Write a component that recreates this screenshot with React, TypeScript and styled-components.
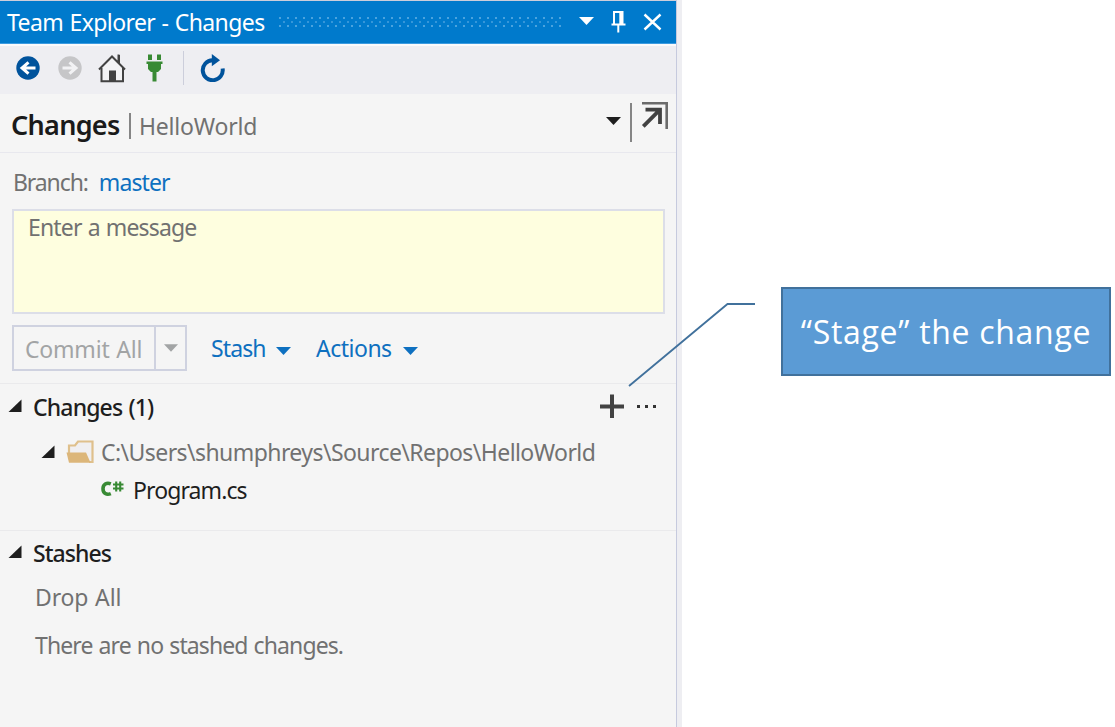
import React from "react";
import styled, { createGlobalStyle } from "styled-components";

const GlobalStyle = createGlobalStyle`
  * { box-sizing: border-box; }
  body {
    margin: 0;
    background: #ffffff;
    font-family: "Noto Sans", "Open Sans", sans-serif;
  }
  svg { display: block; flex: none; }
`;

const Page = styled.div`
  position: relative;
  display: flex;
  align-items: flex-start;
  width: 1115px;
  height: 727px;
  overflow: hidden;
`;

const Dock = styled.div`
  display: flex;
  width: 682px;
  height: 727px;
  background: #eeeef2;
`;

const Panel = styled.section`
  display: flex;
  flex-direction: column;
  width: 677px;
  height: 727px;
  border-top: 1px solid #cccedb;
  border-right: 1px solid #c6cade;
  background: #f5f5f5;
`;

const Label = styled.span<{ $size?: number; $track?: number; $weight?: number; $color?: string }>`
  flex: none;
  font-size: ${(p) => p.$size ?? 23}px;
  font-weight: ${(p) => p.$weight ?? 400};
  line-height: 30px;
  letter-spacing: ${(p) => p.$track ?? -0.6}px;
  word-spacing: 1px;
  color: ${(p) => p.$color ?? "#717171"};
  white-space: pre;
`;

const TitleBar = styled.header`
  display: flex;
  align-items: flex-start;
  height: 43px;
  padding: 6px 0 0 7px;
  background: #007acc;
  border-bottom: 1px solid #3c9be0;
`;

const TitleText = styled.div`
  width: 271px;
`;

const Grip = styled.div`
  padding-top: 9px;
  width: 301px;
`;

const TitleButtons = styled.div`
  display: flex;
  gap: 17px;
  padding-top: 3px;
`;

const Toolbar = styled.nav`
  display: flex;
  align-items: center;
  height: 50px;
  padding: 0 0 4px 15px;
  border-top: 2px solid #fafafb;
  background: #eeeef2;
`;

const ToolIcon = styled.span<{ $w: number; $gap: number }>`
  display: flex;
  width: ${(p) => p.$w}px;
  margin-right: ${(p) => p.$gap}px;
`;

const ToolDivider = styled.span`
  width: 1px;
  height: 34px;
  margin-right: 16px;
  background: #cccedb;
`;

const PageHeader = styled.div`
  display: flex;
  height: 59px;
  padding: 7px 8px 0 11px;
  border-bottom: 1px solid #e8e8ee;
`;

const HeaderTitle = styled.div`
  display: flex;
  flex: 1;
  padding-top: 9px;
`;

const TitleSlot = styled.div<{ $w: number }>`
  width: ${(p) => p.$w}px;
  flex: none;
`;

const RepoName = styled.div`
  padding-top: 1px;
`;

const Bar = styled.span<{ $h: number; $top: number }>`
  width: 2px;
  height: ${(p) => p.$h}px;
  margin-top: ${(p) => p.$top}px;
  background: #858585;
`;

const HeaderActions = styled.div`
  display: flex;
`;

const BranchRow = styled.div`
  display: flex;
  gap: 11px;
  height: 56px;
  padding: 14px 0 0 13px;
`;

const MessageBox = styled.div`
  width: 653px;
  height: 105px;
  margin-left: 12px;
  padding: 1px 0 0 14px;
  border: 2px solid #dcdee8;
  background: #fefedf;
`;

const ActionRow = styled.div`
  display: flex;
  height: 70px;
  padding: 11px 0 0 12px;
  border-bottom: 1px solid #eaeaec;
`;

const CommitButton = styled.div`
  display: flex;
  width: 175px;
  height: 46px;
  margin-right: 24px;
  border: 2px solid #cfd2e0;
`;

const CommitText = styled.div`
  width: 142px;
  padding: 7px 0 0 11px;
  border-right: 2px solid #cfd2e0;
`;

const CommitArrow = styled.div`
  padding: 17px 0 0 8px;
`;

const MenuLink = styled.div<{ $w: number }>`
  display: flex;
  justify-content: space-between;
  width: ${(p) => p.$w}px;
  margin-right: 25px;
  padding-top: 8px;
`;

const ArrowSlot = styled.span<{ $top: number }>`
  padding-top: ${(p) => p.$top}px;
`;

const Section = styled.section<{ $h: number; $line?: boolean }>`
  height: ${(p) => p.$h}px;
  padding-top: ${(p) => (p.$line ? 8 : 7)}px;
  border-bottom: ${(p) => (p.$line ? "1px solid #eaeaec" : "0")};
`;

const Row = styled.div<{ $indent: number; $h: number }>`
  display: flex;
  height: ${(p) => p.$h}px;
  padding-left: ${(p) => p.$indent}px;
`;

const Glyph = styled.span<{ $w: number; $top: number }>`
  flex: none;
  width: ${(p) => p.$w}px;
  padding-top: ${(p) => p.$top}px;
`;

const Spacer = styled.span`
  flex: 1;
`;

const SectionTools = styled.div`
  display: flex;
  gap: 12px;
  padding: 1px 19px 0 0;
`;

const Callout = styled.aside`
  display: flex;
  justify-content: center;
  width: 330px;
  height: 89px;
  margin: 287px 0 0 99px;
  padding-top: 21px;
  border: 2px solid #41719c;
  background: #5b9bd5;
`;

const CalloutText = styled.span`
  font-family: "Open Sans", sans-serif;
  font-size: 32px;
  line-height: 44px;
  letter-spacing: 0.7px;
  color: #ffffff;
  white-space: nowrap;
`;

const Leader = styled.svg`
  position: absolute;
  left: 620px;
  top: 295px;
`;

const Caret = ({ color, w = 15, h = 8 }: { color: string; w?: number; h?: number }) => (
  <svg width={w} height={h} viewBox="0 0 15 8">
    <path d="M0 0H15L7.5 8Z" fill={color} />
  </svg>
);

const Expander = () => (
  <svg width="14" height="14" viewBox="0 0 14 14">
    <path d="M13.5 0.5V13H0.5Z" fill="#1e1e1e" />
  </svg>
);

const dots = Array.from({ length: 36 }, (_, i) => i);

export default function App() {
  return (
    <Page>
      <GlobalStyle />
      <Dock>
        <Panel>
          <TitleBar>
            <TitleText>
              <Label $color="#ffffff" $track={-0.6}>Team Explorer - Changes</Label>
            </TitleText>
            <Grip>
              <svg width="286" height="12" viewBox="0 0 286 12">
                {dots.map((i) => (
                  <g key={i} fill="#4ba3de">
                    <rect x={1 + i * 8} y="1" width="2" height="2" />
                    <rect x={1 + i * 8} y="9" width="2" height="2" />
                    {i < 35 && <rect x={5 + i * 8} y="5" width="2" height="2" opacity="0.7" />}
                  </g>
                ))}
              </svg>
            </Grip>
            <TitleButtons>
              <Glyph $w={15} $top={7}>
                <Caret color="#ffffff" />
              </Glyph>
              <svg width="15" height="24" viewBox="0 0 15 24">
                <path d="M3 14V2H11.5V14M0.5 14.5H14.5M7.3 15V22.5" fill="none" stroke="#fff" strokeWidth="2" />
                <path d="M9.8 2V14" stroke="#fff" strokeWidth="3" />
              </svg>
              <svg width="19" height="24" viewBox="0 0 19 24">
                <path d="M1.5 4.5L17.5 19.5M17.5 4.5L1.5 19.5" stroke="#fff" strokeWidth="2.4" />
              </svg>
            </TitleButtons>
          </TitleBar>

          <Toolbar>
            <ToolIcon $w={26} $gap={16}>
              <svg width="26" height="26" viewBox="0 0 26 26">
                <circle cx="13" cy="13" r="11.7" fill="#00539c" />
                <path d="M20.5 13H8M13.5 7.3L7 13L13.5 18.7" fill="none" stroke="#fff" strokeWidth="3" />
              </svg>
            </ToolIcon>
            <ToolIcon $w={26} $gap={15}>
              <svg width="26" height="26" viewBox="0 0 26 26">
                <circle cx="13" cy="13" r="11.7" fill="#c6c6c8" />
                <path d="M5.5 13H18M12.5 7.3L19 13L12.5 18.7" fill="none" stroke="#f2f2f4" strokeWidth="3" />
              </svg>
            </ToolIcon>
            <ToolIcon $w={28} $gap={20}>
              <svg width="28" height="29" viewBox="0 0 28 29">
                <path d="M4 13V27H25V13L14 3Z" fill="#f3f3f5" />
                <path d="M1 15.5L14 2.5L27 15.5M20.5 8.5V0.5M20.5 8.5V1M21 9.5V1" fill="none" stroke="#424242" strokeWidth="2" />
                <path d="M3.5 14V27.3H25V14" fill="none" stroke="#424242" strokeWidth="2" />
                <rect x="11" y="16.5" width="7" height="11" fill="#424242" />
              </svg>
            </ToolIcon>
            <ToolIcon $w={17} $gap={20}>
              <svg width="17" height="28" viewBox="0 0 17 28">
                <path d="M2 0.5H6V6H2ZM11 0.5H15V6H11ZM0.5 7.5H16.5V10H15V15L12 18H10.5V27.5H6.5V18H5L2 15V10H0.5Z" fill="#388a34" />
              </svg>
            </ToolIcon>
            <ToolDivider />
            <svg width="26" height="28" viewBox="0 0 26 28">
              <path d="M12.5 6.2A10 10 0 1 0 22.6 14.5" fill="none" stroke="#00539c" strokeWidth="4" />
              <path d="M11.8 0L20 6.2L11.8 12.3Z" fill="#00539c" />
            </svg>
          </Toolbar>

          <PageHeader>
            <HeaderTitle>
              <TitleSlot $w={118}>
                <Label $size={27} $weight={600} $color="#1a1a1a" $track={-0.7}>Changes</Label>
              </TitleSlot>
              <Bar $h={26} $top={3} />
              <TitleSlot $w={8} />
              <RepoName>
                <Label $track={-0.2}>HelloWorld</Label>
              </RepoName>
            </HeaderTitle>
            <HeaderActions>
              <Glyph $w={24} $top={16}>
                <Caret color="#1e1e1e" />
              </Glyph>
              <Bar $h={39} $top={2} />
              <Glyph $w={36} $top={0}>
                <svg width="36" height="32" viewBox="0 0 36 32">
                  <path d="M10 2.3H34.7V28" fill="none" stroke="#6b6b6b" strokeWidth="2.6" />
                  <path d="M13.5 8.7H28V23M28 8.7L11.3 25.3" fill="none" stroke="#424242" strokeWidth="3.8" />
                </svg>
              </Glyph>
            </HeaderActions>
          </PageHeader>

          <BranchRow>
            <Label $track={-1.1}>Branch:</Label>
            <Label $color="#0e70c0" $track={-0.9}>master</Label>
          </BranchRow>
          <MessageBox>
            <Label $track={-0.85}>Enter a message</Label>
          </MessageBox>

          <ActionRow>
            <CommitButton>
              <CommitText>
                <Label $color="#a2a4a5" $track={-0.2}>Commit All</Label>
              </CommitText>
              <CommitArrow>
                <Caret color="#a2a4a5" w={14} h={8} />
              </CommitArrow>
            </CommitButton>
            <MenuLink $w={80}>
              <Label $color="#0e70c0" $track={-0.9}>Stash</Label>
              <ArrowSlot $top={14}><Caret color="#0e70c0" /></ArrowSlot>
            </MenuLink>
            <MenuLink $w={102}>
              <Label $color="#0e70c0" $track={-0.5}>Actions</Label>
              <ArrowSlot $top={14}><Caret color="#0e70c0" /></ArrowSlot>
            </MenuLink>
          </ActionRow>

          <Section $h={147} $line>
            <Row $indent={8} $h={45}>
              <Glyph $w={25} $top={7}><Expander /></Glyph>
              <Label $weight={500} $color="#1e1e1e" $track={-0.85}>Changes (1)</Label>
              <Spacer />
              <SectionTools>
                <svg width="26" height="26" viewBox="0 0 26 26">
                  <path d="M13 1.5V25M1 13.5H25" stroke="#424242" strokeWidth="4" />
                </svg>
                <svg width="20" height="26" viewBox="0 0 20 26">
                  <path d="M0 12H3V15H0ZM8 12H11V15H8ZM16 12H19V15H16Z" fill="#333" />
                </svg>
              </SectionTools>
            </Row>
            <Row $indent={41} $h={38}>
              <Glyph $w={25} $top={8}><Expander /></Glyph>
              <Glyph $w={35} $top={3}>
                <svg width="28" height="24" viewBox="0 0 28 24">
                  <path d="M3 13V5.5H9L12 1.5H26.5V22H23" fill="#f0eff1" stroke="#dfc08c" strokeWidth="2.2" />
                  <path d="M0.5 12.5H20L24.5 22.8H3Z" fill="#dcb67a" />
                </svg>
              </Glyph>
              <Label $track={-0.57}>C:\Users\shumphreys\Source\Repos\HelloWorld</Label>
            </Row>
            <Row $indent={101} $h={38}>
              <Glyph $w={32} $top={6}>
                <svg width="23" height="16" viewBox="0 0 23 16">
                  <path d="M9.8 2.9C5.5 1.2 2 3.4 2 7.8S5.5 14.4 9.8 12.6" fill="none" stroke="#388a34" strokeWidth="3.6" />
                  <path d="M15.2 0.5V10.5M19.2 0.5V10.5M12 3.5H22.5M12 7.5H22.5" stroke="#388a34" strokeWidth="2.1" />
                </svg>
              </Glyph>
              <Label $color="#1e1e1e" $track={-0.9}>Program.cs</Label>
            </Row>
          </Section>

          <Section $h={196}>
            <Row $indent={8} $h={44}>
              <Glyph $w={25} $top={7}><Expander /></Glyph>
              <Label $weight={500} $color="#1e1e1e" $track={-0.95}>Stashes</Label>
            </Row>
            <Row $indent={35} $h={48}><Label $track={-0.15}>Drop All</Label></Row>
            <Row $indent={35} $h={48}><Label $track={-0.9}>There are no stashed changes.</Label></Row>
          </Section>
        </Panel>
      </Dock>

      <Callout>
        <CalloutText>“Stage” the change</CalloutText>
      </Callout>

      <Leader width="140" height="96" viewBox="0 0 140 96">
        <path d="M9 91L107.5 9H135" fill="none" stroke="#41719c" strokeWidth="1.8" />
      </Leader>
    </Page>
  );
}
